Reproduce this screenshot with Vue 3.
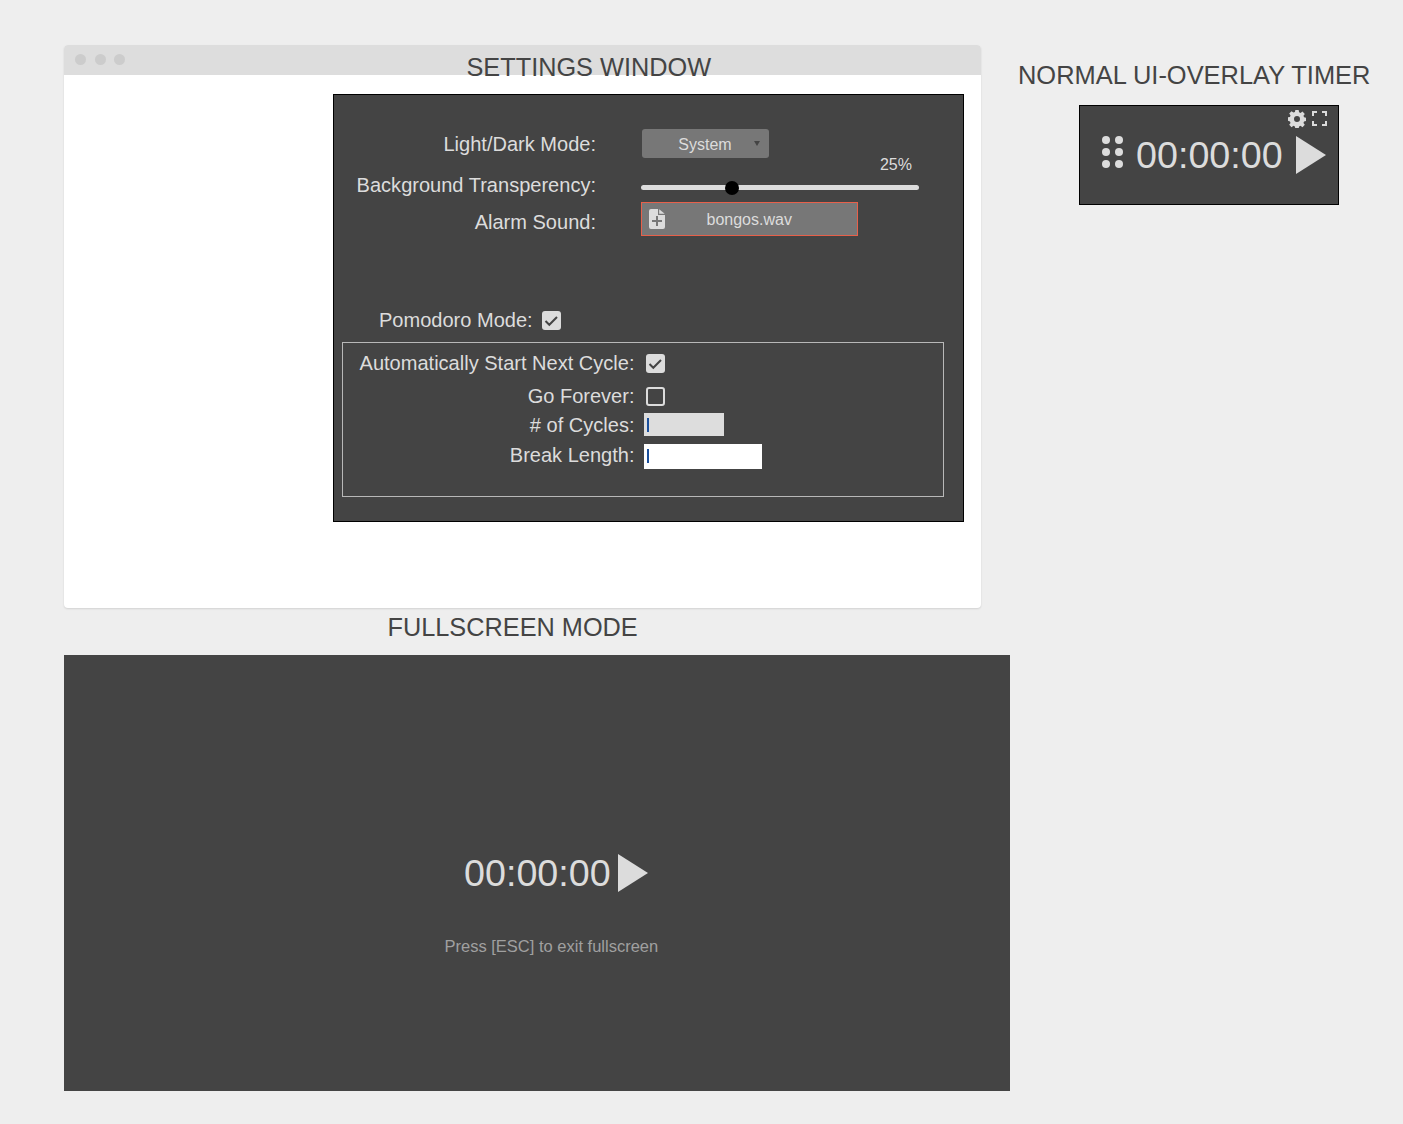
<script setup>
import { ref } from 'vue'

const lightDark = ref('System')
const opacity = ref(25)
const alarmFile = ref('bongos.wav')
const time = ref('00:00:00')
const dots = [0, 1, 2, 3, 4, 5]
</script>

<template>
  <div class="canvas">
    <!-- settings mock window -->
    <section class="mock-window">
      <div class="title-bar">
        <span class="light"></span>
        <span class="light"></span>
        <span class="light"></span>
      </div>
    </section>
    <h2 class="caption caption-settings">SETTINGS WINDOW</h2>

    <div class="settings">
      <div class="basic">
        <div class="labels">
          <label class="lbl-mode">Light/Dark Mode:</label>
          <label class="lbl-bg">Background Transperency:</label>
          <label class="lbl-alarm">Alarm Sound:</label>
        </div>
        <div class="controls">
          <div class="select">
            <span>{{ lightDark }}</span>
            <i class="caret"></i>
          </div>
          <div class="percent">{{ opacity }}%</div>
          <div class="slider"><i class="thumb"></i></div>
          <div class="file">
            <svg class="file-icon" viewBox="0 0 16 20" width="16" height="20">
              <path fill="#dcdcdc" fill-rule="evenodd" d="M2 0h7v6h7v12a2 2 0 0 1-2 2H2a2 2 0 0 1-2-2V2a2 2 0 0 1 2-2zM7 7v4H3v2h4v4h2v-4h4v-2H9V7z" />
              <path fill="#dcdcdc" d="M10.200 0.300L15.700 4.800h-5.500z" />
            </svg>
            <span>{{ alarmFile }}</span>
          </div>
        </div>
      </div>

      <div class="pomodoro">
        <label>Pomodoro Mode:</label>
        <span class="check on">
          <svg viewBox="0 0 19 19" width="19" height="19"><path d="M3.500 10l3.800 3.800L15 6" fill="none" stroke="#444" stroke-width="2" /></svg>
        </span>
      </div>

      <div class="pomodoro-box">
        <div class="row row-auto">
          <label>Automatically Start Next Cycle:</label>
          <span class="check on">
            <svg viewBox="0 0 19 19" width="19" height="19"><path d="M3.500 10l3.800 3.800L15 6" fill="none" stroke="#444" stroke-width="2" /></svg>
          </span>
        </div>
        <div class="row row-forever">
          <label>Go Forever:</label>
          <span class="check"></span>
        </div>
        <div class="row row-cycles">
          <label># of Cycles:</label>
          <div class="input input-grey"><i class="cursor"></i></div>
        </div>
        <div class="row row-break">
          <label>Break Length:</label>
          <div class="input input-white"><i class="cursor"></i></div>
        </div>
      </div>
    </div>

    <!-- overlay timer -->
    <h2 class="caption caption-overlay">NORMAL UI-OVERLAY TIMER</h2>
    <div class="overlay">
      <div class="overlay-tools">
        <svg viewBox="0 0 24 24" width="18" height="18"><path fill="#dcdcdc" fill-rule="evenodd" d="M9.800 0h4.400l.6 3.100 1.900.8 2.600-1.800 3.100 3.100-1.800 2.600.8 1.900 3.100.6v4.400l-3.100.6-.8 1.900 1.800 2.600-3.100 3.100-2.600-1.800-1.900.8-.6 3.100H9.800l-.6-3.100-1.900-.8-2.600 1.800-3.100-3.100 1.800-2.600-.8-1.900L-.5 14.200V9.800l3.100-.6.8-1.900-1.800-2.600 3.100-3.100 2.600 1.800 1.900-.8zM12 8a4 4 0 1 0 0 8 4 4 0 0 0 0-8z" /></svg>
        <svg viewBox="0 0 15 15" width="15" height="15"><path fill="none" stroke="#dcdcdc" stroke-width="2" d="M1 5V1h4M10 1h4v4M14 10v4h-4M5 14H1v-4" /></svg>
      </div>
      <div class="overlay-main">
        <div class="grip"><i v-for="d in dots" :key="d"></i></div>
        <span class="time">{{ time }}</span>
        <svg class="play" viewBox="0 0 30 38" width="30" height="38"><path fill="#dcdcdc" d="M0 0l30 19L0 38z" /></svg>
      </div>
    </div>

    <!-- fullscreen -->
    <h2 class="caption caption-full">FULLSCREEN MODE</h2>
    <div class="fullscreen">
      <div class="full-timer">
        <span class="time">{{ time }}</span>
        <svg class="play" viewBox="0 0 30 38" width="30" height="38"><path fill="#dcdcdc" d="M0 0l30 19L0 38z" /></svg>
      </div>
      <p class="esc">Press [ESC] to exit fullscreen</p>
    </div>
  </div>
</template>

<style scoped>
.canvas {
  position: relative;
  width: 1403px;
  height: 1124px;
  overflow: hidden;
  background: #eeeeee;
  font-family: "Liberation Sans", Arial, sans-serif;
  color: #dcdcdc;
}

.caption {
  position: absolute;
  margin: 0;
  font-size: 25.300px;
  line-height: 28px;
  font-weight: 400;
  color: #444;
  white-space: nowrap;
}
.caption-settings { left: 466.500px; top: 53px; }
.caption-overlay { left: 1018px; top: 61px; font-size: 25.450px; }
.caption-full { left: 387.500px; top: 613px; }

.mock-window {
  position: absolute;
  left: 64px;
  top: 45px;
  width: 917px;
  height: 563px;
  background: #fff;
  border-radius: 4px;
  box-shadow: 0 1px 2px rgba(0, 0, 0, 0.12);
  overflow: hidden;
}
.title-bar {
  display: flex;
  align-items: center;
  gap: 8.500px;
  height: 30px;
  padding-left: 11px;
  padding-bottom: 1px;
  box-sizing: border-box;
  background: #dddddd;
}
.light {
  width: 11px;
  height: 11px;
  border-radius: 50%;
  background: #cccccc;
}

.settings {
  position: absolute;
  left: 333px;
  top: 94px;
  width: 631px;
  height: 428px;
  box-sizing: border-box;
  border: 1px solid #000;
  background: #444;
  font-size: 20.050px;
}

.basic {
  display: flex;
  padding-top: 34px;
  height: 172px;
  box-sizing: border-box;
}
.labels {
  width: 262px;
  display: flex;
  flex-direction: column;
  align-items: flex-end;
}
.labels label { line-height: 23px; white-space: nowrap; }
.lbl-mode { margin-top: 4px; }
.lbl-bg { margin-top: 18px; }
.lbl-alarm { margin-top: 14px; }

.controls {
  margin-left: 45px;
  width: 278px;
  position: relative;
}
.select {
  position: relative;
  margin-left: 1px;
  width: 127px;
  height: 29px;
  border-radius: 3px;
  background: #777;
  font-size: 16px;
  line-height: 31px;
  text-align: center;
}
.select span { display: block; padding-right: 1px; }
.caret {
  position: absolute;
  right: 9px;
  top: 12px;
  border-left: 3px solid transparent;
  border-right: 3px solid transparent;
  border-top: 5px solid #444;
}
.percent {
  font-size: 16px;
  line-height: 18px;
  text-align: right;
  margin-top: -2px;
  padding-right: 7px;
  height: 18px;
}
.slider {
  position: relative;
  margin-top: 11px;
  height: 5px;
  border-radius: 3px;
  background: #dddddd;
}
.thumb {
  position: absolute;
  left: 84px;
  top: -4.500px;
  width: 14px;
  height: 14px;
  border-radius: 50%;
  background: #000;
}
.file {
  display: flex;
  align-items: center;
  position: relative;
  margin-top: 12px;
  width: 217px;
  height: 34px;
  box-sizing: border-box;
  border: 1px solid #e7604a;
  background: #777;
  font-size: 16px;
}
.file-icon { margin-left: 7px; }
.file span {
  margin-left: 41.500px;
  padding-top: 2px;
  line-height: 30px;
}

.pomodoro {
  display: flex;
  align-items: center;
  padding-left: 45px;
  height: 37px;
  margin-top: 35px;
  box-sizing: border-box;
}
.pomodoro label { white-space: nowrap; }
.pomodoro .check { margin-left: 9px; }

.check {
  display: inline-block;
  box-sizing: border-box;
  width: 19px;
  height: 19px;
  border: 2px solid #dcdcdc;
  border-radius: 3px;
}
.check.on { background: #dcdcdc; border: 0; }
.check svg { display: block; }

.pomodoro-box {
  margin-left: 8px;
  margin-top: 3px;
  width: 602px;
  height: 155px;
  box-sizing: border-box;
  border: 1px solid #b8b8b8;
  padding-top: 6px;
}
.row {
  display: flex;
  align-items: center;
}
.row label {
  width: 291.500px;
  text-align: right;
  white-space: nowrap;
}
.row .check { margin-left: 11.500px; }
.row-auto { height: 29px; }
.row-forever { height: 29px; margin-top: 4px; }
.row-cycles { height: 23px; margin-top: 2px; }
.row-break { height: 25px; margin-top: 8px; }

.row-cycles label { margin-top: 2px; }
.row-break label { margin-bottom: 2px; }

.input {
  position: relative;
  margin-left: 9.500px;
}
.input-grey { width: 80px; height: 23px; background: #dddddd; }
.input-white { width: 118px; height: 25px; background: #fff; }
.cursor {
  position: absolute;
  left: 3px;
  top: 5px;
  width: 2px;
  height: 14px;
  background: #1a4f9c;
}

.overlay {
  position: absolute;
  left: 1079px;
  top: 105px;
  width: 260px;
  height: 100px;
  box-sizing: border-box;
  border: 1px solid #000;
  background: #444;
}
.overlay-tools {
  display: flex;
  justify-content: flex-end;
  align-items: center;
  gap: 6px;
  padding: 2px 11px 0 0;
  height: 21px;
}
.overlay-main {
  display: flex;
  align-items: center;
  margin-top: 3px;
  padding-left: 22px;
}
.grip {
  display: grid;
  grid-template-columns: 8px 8px;
  column-gap: 5px;
  row-gap: 4px;
  margin-bottom: 7px;
}
.grip i {
  width: 8px;
  height: 8px;
  border-radius: 50%;
  background: #dcdcdc;
}
.time {
  font-size: 37.700px;
  line-height: 46px;
  white-space: nowrap;
}
.overlay-main .time { margin-left: 13px; }
.overlay-main .play { margin-left: 13px; }

.fullscreen {
  position: absolute;
  left: 64px;
  top: 655px;
  width: 946px;
  height: 436px;
  background: #444;
}
.full-timer {
  display: flex;
  align-items: center;
  padding: 195px 0 0 400px;
}
.full-timer .play { margin-left: 7px; }
.esc {
  margin: 40px 0 0 380.500px;
  font-size: 16.500px;
  line-height: 20px;
  color: #a0a0a0;
}
</style>
